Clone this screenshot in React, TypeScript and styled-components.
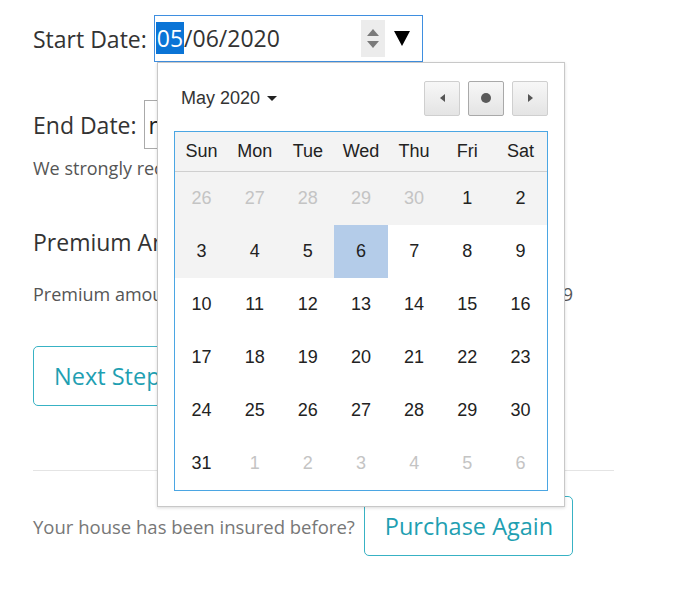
import React from "react";
import styled, { createGlobalStyle } from "styled-components";

const Global = createGlobalStyle`
  html, body { margin: 0; padding: 0; background: #fff; }
  body { font-family: "Open Sans", "Noto Sans", sans-serif; color: #333; }
`;

const Page = styled.div`
  position: relative;
  padding: 15px 0 40px 33px;
  width: 581px;
`;

const FieldRow = styled.div<{ $mt?: number }>`
  display: flex;
  align-items: center;
  gap: 7px;
  margin-top: ${(p) => p.$mt ?? 0}px;
`;

const Label = styled.span`
  font-size: 23px;
  color: #333;
  line-height: 30px;
`;

const DateInput = styled.div`
  position: relative;
  box-sizing: border-box;
  width: 269px;
  height: 47px;
  border: 1px solid #3f8fe0;
  display: flex;
  align-items: center;
  padding-left: 1px;
  font-size: 23px;
  color: #333;
`;

const Sel = styled.span`
  background: #0a74d6;
  color: #fff;
  line-height: 33px;
  padding: 0 1px;
`;

const DateText = styled.span`
  flex: 1;
  line-height: 33px;
`;

const Spinner = styled.div`
  width: 24px;
  height: 37px;
  background: #ececec;
  display: flex;
  flex-direction: column;
  align-items: center;
  justify-content: center;
  gap: 5px;
  margin-right: 9px;
`;

const Drop = styled.div`
  width: 0;
  height: 0;
  border-left: 8px solid transparent;
  border-right: 8px solid transparent;
  border-top: 15px solid #000;
  margin-right: 12px;
`;

const PlainInput = styled.div`
  box-sizing: border-box;
  width: 200px;
  height: 49px;
  border: 1px solid #aaa;
  display: flex;
  align-items: center;
  padding-left: 4px;
  font-size: 23px;
  color: #222;
`;

const Hint = styled.p<{ $mt: number }>`
  margin: ${(p) => p.$mt}px 0 0;
  font-size: 18px;
  line-height: 24px;
  color: #555;
  white-space: nowrap;
`;

const AmountRow = styled.p`
  margin: 25px 0 0;
  width: 540px;
  display: flex;
  justify-content: space-between;
  font-size: 18px;
  line-height: 24px;
  color: #555;
  white-space: nowrap;
`;

const Heading = styled.h3`
  margin: 47px 0 0;
  font-size: 23px;
  font-weight: 400;
  line-height: 30px;
  color: #333;
`;

const OutlineButton = styled.button<{ $w: number }>`
  box-sizing: border-box;
  width: ${(p) => p.$w}px;
  height: 60px;
  border: 1px solid #38b2c4;
  border-radius: 5px;
  background: #fff;
  color: #1f9fb2;
  font-family: "Open Sans", "Noto Sans", sans-serif;
  font-size: 23.5px;
  text-align: left;
  padding: 0 20px;
  white-space: nowrap;
`;

const NextWrap = styled.div`
  margin-top: 40px;
`;

const Rule = styled.hr`
  margin: 64px 0 0;
  border: 0;
  border-top: 1px solid #e4e4e4;
  width: 581px;
`;

const Footer = styled.div`
  display: flex;
  align-items: center;
  gap: 9px;
  margin-top: 25px;
`;

const FooterText = styled.span`
  font-size: 18.5px;
  color: #777;
`;

/* ---------- popup calendar ---------- */

const Popup = styled.div`
  position: absolute;
  top: 62px;
  left: 157px;
  box-sizing: border-box;
  width: 408px;
  height: 445px;
  background: #fff;
  border: 1px solid #c8c8c8;
  box-shadow: 0 1px 3px rgba(0, 0, 0, 0.15);
  padding: 17px 16px 15px;
  font-family: "Liberation Sans", Arial, sans-serif;
  color: #222;
`;

const PopHeader = styled.div`
  display: flex;
  align-items: center;
  justify-content: space-between;
  padding-left: 7px;
  height: 36px;
`;

const MonthSel = styled.div`
  display: flex;
  align-items: center;
  gap: 7px;
  font-size: 18px;
  color: #333;
`;

const Caret = styled.span`
  width: 0;
  height: 0;
  border-left: 5px solid transparent;
  border-right: 5px solid transparent;
  border-top: 5px solid #222;
`;

const NavGroup = styled.div`
  display: flex;
  gap: 8px;
`;

const NavBtn = styled.div<{ $focus?: boolean }>`
  box-sizing: border-box;
  width: 36px;
  height: 35px;
  border: 1px solid ${(p) => (p.$focus ? "#a9a9a9" : "#cfcfcf")};
  border-radius: 2px;
  background: linear-gradient(#f7f7f7, #e4e4e4);
  display: flex;
  align-items: center;
  justify-content: center;
`;

const TriL = styled.span`
  width: 0;
  height: 0;
  border-top: 4px solid transparent;
  border-bottom: 4px solid transparent;
  border-right: 5px solid #555;
`;

const TriR = styled.span`
  width: 0;
  height: 0;
  border-top: 4px solid transparent;
  border-bottom: 4px solid transparent;
  border-left: 5px solid #555;
`;

const Dot = styled.span`
  width: 10px;
  height: 10px;
  border-radius: 50%;
  background: #5a5a5a;
`;

const Table = styled.div`
  margin-top: 15px;
  border: 1px solid #4ba6e3;
  display: grid;
  grid-template-columns: repeat(7, 1fr);
`;

const HeadCell = styled.div`
  height: 39px;
  background: #f3f3f3;
  border-bottom: 1px solid #cfcfcf;
  display: flex;
  align-items: center;
  justify-content: center;
  font-size: 18px;
  color: #222;
`;

const DayCell = styled.div<{ $bg: string; $muted: boolean }>`
  height: 53px;
  background: ${(p) => p.$bg};
  display: flex;
  align-items: center;
  justify-content: center;
  font-size: 18px;
  color: ${(p) => (p.$muted ? "#c4c4c4" : "#222")};
`;

const days = ["Sun", "Mon", "Tue", "Wed", "Thu", "Fri", "Sat"];

type Day = { n: number; muted: boolean; bg: string };

function buildDays(): Day[] {
  const out: Day[] = [];
  [26, 27, 28, 29, 30].forEach((n) => out.push({ n, muted: true, bg: "#f3f3f3" }));
  [1, 2].forEach((n) => out.push({ n, muted: false, bg: "#f3f3f3" }));
  for (let n = 3; n <= 31; n++) {
    let bg = "#fff";
    if (n >= 3 && n <= 5) bg = "#f3f3f3";
    if (n === 6) bg = "#b4cce9";
    out.push({ n, muted: false, bg });
  }
  for (let n = 1; n <= 6; n++) out.push({ n, muted: true, bg: "#fff" });
  return out;
}

export default function App() {
  const cells = buildDays();
  return (
    <>
      <Global />
      <Page>
        <FieldRow>
          <Label>Start Date:</Label>
          <DateInput>
            <DateText>
              <Sel>05</Sel>/06/2020
            </DateText>
            <Spinner>
              <svg width="12" height="7" viewBox="0 0 12 7">
                <path d="M0 7 L6 0 L12 7 Z" fill="#7a7a7a" />
              </svg>
              <svg width="12" height="7" viewBox="0 0 12 7">
                <path d="M0 0 L12 0 L6 7 Z" fill="#7a7a7a" />
              </svg>
            </Spinner>
            <Drop />
          </DateInput>
        </FieldRow>

        <FieldRow $mt={38}>
          <Label>End Date:</Label>
          <PlainInput>mm/dd/yyyy</PlainInput>
        </FieldRow>

        <Hint $mt={7}>We strongly recommend choosing a period of one month.</Hint>

        <Heading>Premium Amount</Heading>
        <AmountRow>
          <span>Premium amount for the selected period:</span>
          <span>$ 249</span>
        </AmountRow>

        <NextWrap>
          <OutlineButton $w={170}>Next Step</OutlineButton>
        </NextWrap>

        <Rule />

        <Footer>
          <FooterText>Your house has been insured before?</FooterText>
          <OutlineButton $w={209}>Purchase Again</OutlineButton>
        </Footer>

        <Popup>
          <PopHeader>
            <MonthSel>
              May 2020 <Caret />
            </MonthSel>
            <NavGroup>
              <NavBtn>
                <TriL />
              </NavBtn>
              <NavBtn $focus>
                <Dot />
              </NavBtn>
              <NavBtn>
                <TriR />
              </NavBtn>
            </NavGroup>
          </PopHeader>
          <Table>
            {days.map((d) => (
              <HeadCell key={d}>{d}</HeadCell>
            ))}
            {cells.map((c, i) => (
              <DayCell key={i} $bg={c.bg} $muted={c.muted}>
                {c.n}
              </DayCell>
            ))}
          </Table>
        </Popup>
      </Page>
    </>
  );
}
